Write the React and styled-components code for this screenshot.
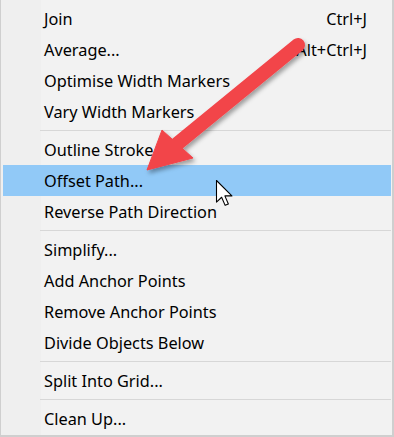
import React from "react";
import styled, { createGlobalStyle } from "styled-components";

const GlobalStyle = createGlobalStyle`
  html, body {
    margin: 0;
    padding: 0;
    background: #ffffff;
  }
`;

const Menu = styled.div`
  position: relative;
  box-sizing: border-box;
  width: 394px;
  height: 437px;
  overflow: hidden;
  padding: 3px 1px 0 2px;
  border-left: 1px solid #cfcfcf;
  border-right: 2px solid #cfcfcf;
  border-bottom: 2px solid #cfcfcf;
  background: linear-gradient(to right, #efefef 40px, #f2f2f2 40px);
  font-family: "Segoe UI", "Noto Sans", sans-serif;
  font-size: 16.3px;
  color: #000;
`;

const Item = styled.div`
  display: flex;
  align-items: center;
  justify-content: space-between;
  height: 31px;
  padding: 0 24px 0 41px;
  background: ${props => (props.active ? "#91c9f7" : "transparent")};
`;

const Shortcut = styled.span`
  white-space: nowrap;
`;

const Separator = styled.div`
  height: 1px;
  margin: 3px 0 3px 37px;
  background: #d7d7d7;
`;

const Overlay = styled.svg`
  position: absolute;
  left: 0;
  top: 0;
  pointer-events: none;
`;

const groups = [
  [
    { label: "Join", key: "Ctrl+J" },
    { label: "Average...", key: "Alt+Ctrl+J" },
    { label: "Optimise Width Markers" },
    { label: "Vary Width Markers" },
  ],
  [
    { label: "Outline Stroke" },
    { label: "Offset Path...", active: true },
    { label: "Reverse Path Direction" },
  ],
  [
    { label: "Simplify..." },
    { label: "Add Anchor Points" },
    { label: "Remove Anchor Points" },
    { label: "Divide Objects Below" },
  ],
  [{ label: "Split Into Grid..." }],
  [{ label: "Clean Up..." }],
];

const App = () => {
  return (
    <>
      <GlobalStyle />
      <Menu>
        {groups.map((group, gi) => (
          <React.Fragment key={gi}>
            {gi > 0 && <Separator />}
            {group.map(item => (
              <Item key={item.label} active={item.active}>
                <span>{item.label}</span>
                {item.key && <Shortcut>{item.key}</Shortcut>}
              </Item>
            ))}
          </React.Fragment>
        ))}

        {/* red callout arrow */}
        <Overlay width="394" height="437" viewBox="0 0 394 437">
          <defs>
            <filter id="shadow" x="-20%" y="-20%" width="140%" height="140%">
              <feDropShadow dx="2" dy="3" stdDeviation="2" floodColor="#000" floodOpacity="0.35" />
            </filter>
          </defs>
          <g filter="url(#shadow)" fill="#f2444a" stroke="#f2444a">
            <line x1="297" y1="45" x2="176" y2="144" strokeWidth="14" strokeLinecap="round" />
            <polygon points="146,170 161,130 192,158" strokeWidth="1" strokeLinejoin="round" />
          </g>
          {/* mouse pointer */}
          <g transform="translate(215.5 180.5) scale(1.35)">
            <path
              d="M0 0 L0 16 L3.8 12.4 L6.4 18.4 L8.8 17.4 L6.2 11.4 L11.4 11.4 Z"
              fill="#fff"
              stroke="#000"
              strokeWidth="0.8"
              strokeLinejoin="round"
            />
          </g>
        </Overlay>
      </Menu>
    </>
  );
};

export default App;
